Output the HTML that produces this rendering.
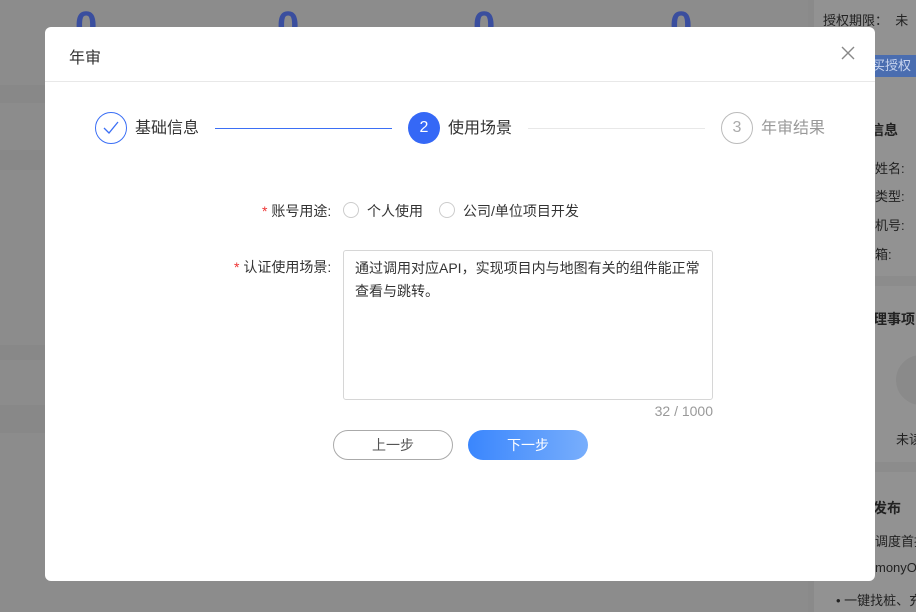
<!DOCTYPE html>
<html><head><meta charset="utf-8"><style>
*{margin:0;padding:0;box-sizing:border-box}
html,body{width:916px;height:612px;overflow:hidden}
body{background:#8c8c8c;font-family:"Liberation Sans","Noto Sans CJK SC",sans-serif;position:relative;color:#333}
.a{position:absolute;white-space:nowrap}
.z{color:#3a4e9e;font-size:40px;font-weight:bold;top:4px}
.side{left:808px;top:0;width:108px;height:612px;background:#929292}
.st{font-size:13px;color:#222}
.modal{left:45px;top:27px;width:830px;height:554px;background:#fff;border-radius:6px}
.circ{width:32px;height:32px;border-radius:50%;text-align:center;line-height:30px;font-size:16px}
.lab{font-size:16px;line-height:20px}
.radio{width:16px;height:16px;border:1px solid #ccc;border-radius:50%;background:#fff}
</style></head><body>
<div class="a z" style="left:75px">0</div>
<div class="a z" style="left:277px">0</div>
<div class="a z" style="left:473px">0</div>
<div class="a z" style="left:670px">0</div>
<div class="a" style="left:0;top:85px;width:808px;height:18px;background:#888"></div>
<div class="a" style="left:0;top:150px;width:808px;height:20px;background:#888"></div>
<div class="a" style="left:0;top:345px;width:808px;height:15px;background:#888"></div>
<div class="a" style="left:0;top:405px;width:808px;height:28px;background:#888"></div>
<div class="a side"></div>
<div class="a" style="left:808px;top:0;width:6px;height:612px;background:#8a8a8a"></div>
<div class="a st" style="left:823px;top:10px">授权期限：&nbsp;&nbsp;未</div>
<div class="a" style="left:860px;top:55px;width:56px;height:22px;background:#4a6db0;color:#c8d4ee;font-size:13px;line-height:22px;padding-left:12px">买授权</div>
<div class="a" style="left:814px;top:276px;width:102px;height:10px;background:#8c8c8c"></div>
<div class="a" style="left:814px;top:462px;width:102px;height:10px;background:#8c8c8c"></div>
<div class="a st" style="left:870px;top:120px;font-weight:bold;font-size:14px">信息</div>
<div class="a st" style="left:875px;top:158px">姓名:</div>
<div class="a st" style="left:875px;top:186px">类型:</div>
<div class="a st" style="left:875px;top:215px">机号:</div>
<div class="a st" style="left:875px;top:244px">箱:</div>
<div class="a st" style="left:873px;top:309px;font-weight:bold;font-size:14px">理事项</div>
<div class="a" style="left:896px;top:355px;width:50px;height:50px;border-radius:50%;background:#8a8a8a"></div>
<div class="a st" style="left:896px;top:429px">未读</div>
<div class="a st" style="left:873px;top:498px;font-weight:bold;font-size:14px">发布</div>
<div class="a st" style="left:875px;top:531px">调度首推</div>
<div class="a st" style="left:875px;top:560px">monyOS</div>
<div class="a st" style="left:836px;top:590px">• 一键找桩、充</div>

<div class="a modal">
 <div class="a" style="left:24px;top:17px;font-size:16px;color:#333">年审</div>
 <svg class="a" style="left:796px;top:19px" width="14" height="14"><path d="M1 1L13 13M13 1L1 13" stroke="#888" stroke-width="1.4"/></svg>
 <div class="a" style="left:0;top:54px;width:830px;height:1px;background:#e8e8e8"></div>
 <div class="a circ" style="left:50px;top:85px;border:1px solid #3b6ff5"><svg width="18" height="14" style="margin-top:8px"><path d="M2 7L7 12L16 1" fill="none" stroke="#3b6ff5" stroke-width="1.3"/></svg></div>
 <div class="a lab" style="left:90px;top:92px">基础信息</div>
 <div class="a" style="left:170px;top:101px;width:177px;height:1px;background:#3b6ff5"></div>
 <div class="a circ" style="left:363px;top:85px;background:#3568f6;color:#fff;line-height:32px">2</div>
 <div class="a lab" style="left:403px;top:92px">使用场景</div>
 <div class="a" style="left:483px;top:101px;width:177px;height:1px;background:#e8e8e8"></div>
 <div class="a circ" style="left:676px;top:85px;border:1px solid #bbb;color:#aaa">3</div>
 <div class="a lab" style="left:716px;top:92px;color:#999">年审结果</div>

 <div class="a" style="left:217px;top:174px;font-size:14px"><span style="color:#e33">*</span> 账号用途:</div>
 <div class="a radio" style="left:298px;top:175px"></div>
 <div class="a" style="left:322px;top:174px;font-size:14px">个人使用</div>
 <div class="a radio" style="left:394px;top:175px"></div>
 <div class="a" style="left:418px;top:174px;font-size:14px">公司/单位项目开发</div>

 <div class="a" style="left:189px;top:230px;font-size:14px"><span style="color:#e33">*</span> 认证使用场景:</div>
 <div class="a" style="left:298px;top:223px;width:370px;height:150px;border:1px solid #d6d6d6;border-radius:3px;padding:6px 11px;font-size:14px;line-height:23px;white-space:normal">通过调用对应API，实现项目内与地图有关的组件能正常查看与跳转。</div>
 <div class="a" style="left:600px;top:376px;width:68px;text-align:right;font-size:14px;color:#999">32 / 1000</div>
 <div class="a" style="left:288px;top:403px;width:120px;height:30px;border:1px solid #aaa;border-radius:15px;text-align:center;line-height:28px;font-size:14px;color:#555">上一步</div>
 <div class="a" style="left:423px;top:403px;width:120px;height:30px;border-radius:15px;text-align:center;line-height:30px;font-size:14px;color:#fff;background:linear-gradient(90deg,#3a86fd,#78aefc)">下一步</div>
</div>
</body></html>
